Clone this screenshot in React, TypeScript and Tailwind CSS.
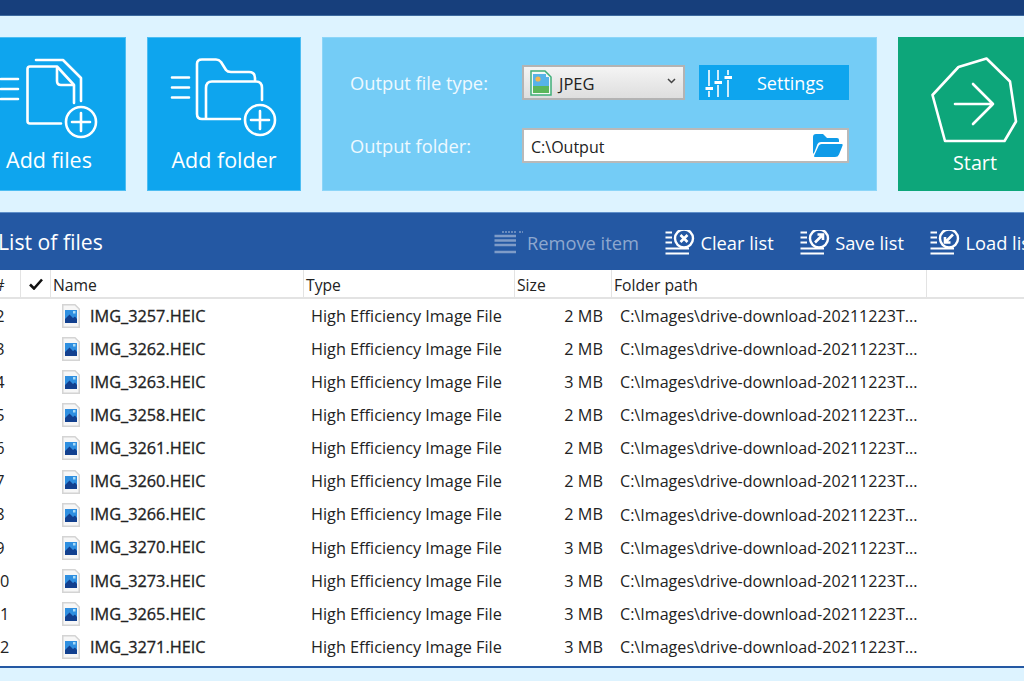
import type { ReactNode } from "react";

const rows = [
  ["2", "IMG_3257.HEIC", "2 MB"],
  ["3", "IMG_3262.HEIC", "2 MB"],
  ["4", "IMG_3263.HEIC", "3 MB"],
  ["5", "IMG_3258.HEIC", "2 MB"],
  ["6", "IMG_3261.HEIC", "2 MB"],
  ["7", "IMG_3260.HEIC", "2 MB"],
  ["8", "IMG_3266.HEIC", "2 MB"],
  ["9", "IMG_3270.HEIC", "3 MB"],
  ["10", "IMG_3273.HEIC", "3 MB"],
  ["11", "IMG_3265.HEIC", "3 MB"],
  ["12", "IMG_3271.HEIC", "3 MB"],
];

const cols = "grid grid-cols-[42px_30px_253px_211px_97px_315px_1fr]";

function AddFilesIcon() {
  return (
    <svg width="100" height="84" viewBox="-1 55 100 84" fill="none" stroke="white" strokeWidth="2.6" strokeLinecap="round" strokeLinejoin="round">
      <path d="M1 78H18M1 88H18M1 98H18" />
      <path d="M61 122.5H30Q27.5 122.5 27.5 120V68Q27.5 65.5 30 65.5H57L74 84V102" />
      <path d="M57 67V80Q57 84 61 84H73" />
      <path d="M36 59H63L81 77V100" />
      <circle cx="81" cy="121" r="15" />
      <path d="M81 112V130M72 121H90" />
    </svg>
  );
}

function AddFolderIcon() {
  return (
    <svg width="110" height="84" viewBox="170 55 110 84" fill="none" stroke="white" strokeWidth="2.6" strokeLinecap="round" strokeLinejoin="round">
      <path d="M173 76.5H190M173 86.5H190M173 96.5H190" />
      <path d="M241 118H203Q198 118 198 113V63Q198 58.5 203 58.5H217Q220 58.5 222 61L227 69Q228.5 71 232 71H250Q256 71 256 77V79" />
      <path d="M207 117V87Q207 80.5 213 80.5H257Q263 80.5 263 87V99" />
      <circle cx="261" cy="119" r="15" />
      <path d="M261 110V128M252 119H270" />
    </svg>
  );
}

function StartIcon() {
  return (
    <svg width="90" height="90" viewBox="929 55 90 90" fill="none" stroke="white" strokeWidth="2.6" strokeLinejoin="round" strokeLinecap="round">
      <path d="M985.5 58.5L957.5 67L931.5 95L944 141H1003.5L1015 121.5L1009 81.5Z" />
      <path d="M954 104H992M972 84L992 104L972 124" />
    </svg>
  );
}

function SlidersIcon() {
  return (
    <svg width="28" height="31" viewBox="0 0 28 31" fill="none" stroke="white" strokeWidth="1.6">
      <path d="M4 3V19M4 24V30M13 3V13M13 18V30M23 3V8M23 13V30" />
      <path d="M0.5 21.5H8M9.5 15.5H17M19.5 10.5H27" strokeWidth="3" />
    </svg>
  );
}

function JpegIcon() {
  return (
    <svg width="22" height="26" viewBox="0 0 22 26">
      <path d="M1 1H15L21 7V25H1Z" fill="#f4f8f6" stroke="#3fae78" strokeWidth="1.5" />
      <rect x="3" y="4" width="13" height="12" fill="#57b3e8" />
      <path d="M16 7H19V16H16Z" fill="#57b3e8" />
      <rect x="3" y="16" width="16" height="7" fill="#5bb65a" />
      <circle cx="8" cy="9" r="2.6" fill="#f2b550" />
    </svg>
  );
}

function FolderOpenIcon() {
  return (
    <svg width="30" height="23" viewBox="0 0 30 23" fill="#0f9be8">
      <path d="M0 3Q0 0 3 0H10L14 4H24Q26 4 26 6V8H8Q5.5 8 4.5 10L1.5 18L0 20Z" />
      <path d="M8.5 10H29Q30 10 29.6 11.5L26 20.5Q25 23 22 23H2Q0.6 23 1.2 21.5L5.8 11.5Q6.6 10 8.5 10Z" />
    </svg>
  );
}

function ListIcon({ children }: { children: ReactNode }) {
  return (
    <svg width="32" height="26" viewBox="0 0 32 26" fill="none" stroke="white" strokeWidth="2" strokeLinecap="butt">
      <path d="M1.5 2.5H8M1.5 7.5H8M1.5 12.5H8" />
      <path d="M1.5 18.5H25M1.5 23.5H25" />
      <circle cx="20" cy="8.5" r="9" strokeWidth="2.4" />
      {children}
    </svg>
  );
}

function RemoveIcon() {
  return (
    <svg width="29" height="25" viewBox="0 0 29 25" fill="none" stroke="#7f9cc8">
      <path d="M8 2H22M25 2H29" strokeWidth="1.6" strokeDasharray="2 1" />
      <path d="M0.5 6H22M0.5 10.5H22M0.5 15H22M0.5 22H22" strokeWidth="2.6" />
    </svg>
  );
}

function FileIcon() {
  return (
    <svg width="18" height="24" viewBox="0 0 18 24" className="shrink-0">
      <path d="M0.75 0.75H13L17.25 5V23.25H0.75Z" fill="#f7f7f7" stroke="#d4d4d4" strokeWidth="1.5" />
      <rect x="3" y="6" width="12" height="13" fill="#2f8fe0" />
      <path d="M3 19V15L7.5 10.5L11 14L13 12.5L15 15V19Z" fill="#12408f" />
      <rect x="11" y="7" width="2.5" height="2.5" fill="#a9dcf8" />
    </svg>
  );
}

function ToolButton({ icon, label, dim }: { icon: ReactNode; label: string; dim?: boolean }) {
  return (
    <div className={`flex items-center gap-[4px] shrink-0 text-[18.3px] ${dim ? "text-[#8ea8cf]" : "text-white"}`}>
      {icon}
      <span>{label}</span>
    </div>
  );
}

export default function App() {
  return (
    <div className="w-[1024px] h-[681px] overflow-hidden bg-[#ddf3ff] font-['Open_Sans','Noto_Sans',sans-serif]">
      <div className="h-[16px] overflow-hidden bg-[#173f7c] border-b border-[#3d6a9f] flex justify-center">
        <span className="ml-[-84px] mt-[-31px] text-[30px] leading-[40px] text-[#8fa8c9] whitespace-nowrap">DocuFreezer</span>
      </div>

      <div className="mt-[21px] ml-[-28px] flex w-[1100px] h-[154px] gap-[21px]">
        <div className="w-[154px] bg-[#0ea5ee] border border-[#4dbdf2] flex flex-col items-center pt-[18px] text-white">
          <AddFilesIcon />
          <span className="mt-[6px] text-[21.5px] leading-[28px]">Add files</span>
        </div>
        <div className="w-[154px] bg-[#0ea5ee] border border-[#4dbdf2] flex flex-col items-center pt-[18px] text-white">
          <AddFolderIcon />
          <span className="mt-[6px] text-[21.5px] leading-[28px]">Add folder</span>
        </div>
        <div className="w-[555px] bg-[#74ccf6] border border-[#8cd5f8] pl-[27px] pt-[27px] text-[#eef9ff]">
          <div className="flex items-center h-[35px]">
            <span className="w-[172px] text-[18.3px] whitespace-nowrap">Output file type:</span>
            <div className="w-[163px] h-[35px] border-2 border-[#b3b3b3] bg-gradient-to-b from-[#f4f4f4] to-[#dedede] flex items-center pl-[6px] text-[#222] text-[16.5px]">
              <JpegIcon />
              <span className="ml-[7px] mt-[3px] flex-1">JPEG</span>
              <svg width="9" height="6" viewBox="0 0 9 6" fill="none" stroke="#444" strokeWidth="1.5" className="mr-[7px] mb-[4px]">
                <path d="M1 1L4.5 4.5L8 1" />
              </svg>
            </div>
            <div className="ml-[14px] w-[150px] h-[35px] bg-[#0ea5ee] flex items-center pl-[6px] text-white text-[18px]">
              <SlidersIcon />
              <span className="ml-[24px] mt-[2px]">Settings</span>
            </div>
          </div>
          <div className="flex items-center h-[35px] mt-[28px]">
            <span className="w-[172px] text-[18.3px] whitespace-nowrap">Output folder:</span>
            <div className="w-[327px] h-[35px] border-2 border-[#b9b9b9] bg-white flex items-center justify-between pl-[7px] pr-[4px] text-[#222] text-[16px]">
              <span className="mt-[2px]">C:\Output</span>
              <FolderOpenIcon />
            </div>
          </div>
        </div>
        <div className="w-[154px] bg-[#0da67a] flex flex-col items-center pt-[18px] text-white">
          <StartIcon />
          <span className="mt-[4px] text-[19.8px] leading-[28px]">Start</span>
        </div>
      </div>

      <div className="mt-[21px] h-[58px] bg-[#2458a3] border-t border-[#5f8fca] flex items-center text-white overflow-hidden">
        <span className="ml-[-2px] w-[496px] shrink-0 text-[21.2px] whitespace-nowrap">List of files</span>
        <div className="flex items-center gap-[25.5px] pt-[2px]">
          <ToolButton dim label="Remove item" icon={<RemoveIcon />} />
          <ToolButton
            label="Clear list"
            icon={
              <ListIcon>
                <path d="M16.5 5L23.5 12M23.5 5L16.5 12" strokeWidth="2.6" />
              </ListIcon>
            }
          />
          <ToolButton
            label="Save list"
            icon={
              <ListIcon>
                <path d="M16 12.5L24 4.5M18.5 4.5H24V10" strokeWidth="2.6" />
              </ListIcon>
            }
          />
          <ToolButton
            label="Load list"
            icon={
              <ListIcon>
                <path d="M24 4.5L16 12.5M21.5 12.5H16V7" strokeWidth="2.6" />
              </ListIcon>
            }
          />
        </div>
      </div>

      <div className="ml-[-21px] w-[1045px] h-[398px] bg-white border-b-2 border-[#2458a3] overflow-hidden text-[#222]">
        <div className={`${cols} h-[29px] border-b-2 border-[#e3e3e3] text-[15.7px] text-[#222]`}>
          <div className="border-r border-[#e3e3e3] flex items-center justify-center pt-[4px]">#</div>
          <div className="border-r border-[#e3e3e3] flex items-center justify-center">
            <svg width="14" height="12" viewBox="0 0 14 12" fill="none" stroke="#111" strokeWidth="2.6">
              <path d="M1 6.5L5 10.5L13 1.5" />
            </svg>
          </div>
          <div className="border-r border-[#e3e3e3] flex items-center pl-[2px] pt-[4px]">Name</div>
          <div className="border-r border-[#e3e3e3] flex items-center pl-[2px] pt-[4px]">Type</div>
          <div className="border-r border-[#e3e3e3] flex items-center pl-[2px] pt-[4px]">Size</div>
          <div className="border-r border-[#e3e3e3] flex items-center pl-[2px] pt-[4px]">Folder path</div>
          <div />
        </div>
        {rows.map(([num, name, size]) => (
          <div key={num} className={`${cols} h-[33.1px] pt-[1px] items-center text-[16.25px] whitespace-nowrap`}>
            <div className="text-center">{num}</div>
            <div />
            <div className="flex items-center pl-[11px]">
              <FileIcon />
              <span className="ml-[10px] text-[16.3px] [-webkit-text-stroke:0.3px_#222]">{name}</span>
            </div>
            <div className="pl-[7px]">High Efficiency Image File</div>
            <div className="text-right pr-[9px]">{size}</div>
            <div className="pl-[8px] text-[16.1px]">C:\Images\drive-download-20211223T...</div>
            <div />
          </div>
        ))}
      </div>
    </div>
  );
}
